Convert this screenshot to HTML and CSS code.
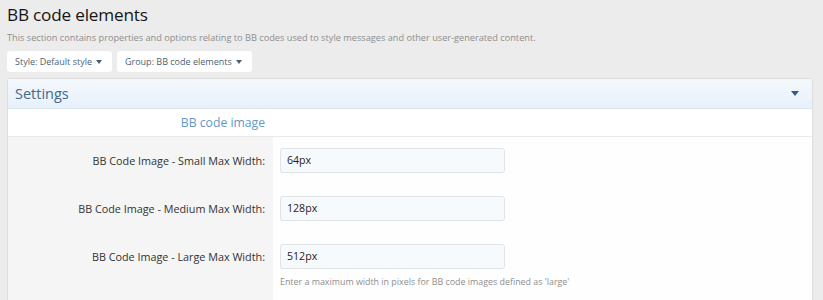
FILE: index.html
```html
<!DOCTYPE html>
<html>
<head>
<meta charset="utf-8">
<link rel="stylesheet" href="styles.css">
</head>
<body>
<div class="page">
  <h1 class="title">BB code elements</h1>
  <p class="desc">This section contains properties and options relating to BB codes used to style messages and other user-generated content.</p>
  <div class="buttons">
    <span class="btn">Style: Default style <span class="caret"></span></span>
    <span class="btn">Group: BB code elements <span class="caret"></span></span>
  </div>
  <div class="panel">
    <div class="panel-head">
      <span class="panel-title">Settings</span>
      <span class="head-caret"></span>
    </div>
    <div class="section-row">
      <div class="section-label">BB code image</div>
    </div>
    <div class="form">
      <div class="row">
        <div class="label">BB Code Image - Small Max Width:</div>
        <div class="field"><div class="input">64px</div></div>
      </div>
      <div class="row">
        <div class="label">BB Code Image - Medium Max Width:</div>
        <div class="field"><div class="input">128px</div></div>
      </div>
      <div class="row">
        <div class="label">BB Code Image - Large Max Width:</div>
        <div class="field">
          <div class="input">512px</div>
          <div class="hint">Enter a maximum width in pixels for BB code images defined as 'large'</div>
        </div>
      </div>
    </div>
  </div>
</div>
</body>
</html>
```

FILE: styles.css
```css
html, body {
  margin: 0;
  padding: 0;
  background: #ececec;
  font-family: "Open Sans", "Noto Sans", "Liberation Sans", sans-serif;
}
.page {
  padding: 3px 10px 0 7px;
}
.title {
  margin: 0;
  font-size: 17.2px;
  font-weight: 400;
  line-height: 24px;
  color: #151515;
  letter-spacing: -0.2px;
}
.desc {
  margin: 4px 0 0;
  font-size: 9.2px;
  line-height: 14px;
  color: #8e8e8e;
}
.buttons {
  display: flex;
  gap: 5px;
  margin-top: 6px;
}
.btn {
  display: flex;
  align-items: center;
  height: 21px;
  padding: 0 10px 0 8px;
  background: #fff;
  border-radius: 3px;
  font-size: 9px;
  color: #4b5f72;
}
.caret {
  display: inline-block;
  margin-left: 4px;
  border-left: 3px solid transparent;
  border-right: 3px solid transparent;
  border-top: 4px solid #4b5f72;
}
.panel {
  margin-top: 6px;
  border: 1px solid #dcdcdc;
  border-radius: 3px 3px 0 0;
  background: #fff;
}
.panel-head {
  display: flex;
  align-items: center;
  justify-content: space-between;
  height: 29px;
  padding: 0 13px 0 7px;
  background: linear-gradient(#f4f8fc, #e7f1fb);
  border-bottom: 1px solid #dde6ee;
}
.panel-title {
  font-size: 14.5px;
  color: #45698a;
}
.head-caret {
  border-left: 4px solid transparent;
  border-right: 4px solid transparent;
  border-top: 5px solid #2f5f88;
}
.section-row {
  display: grid;
  grid-template-columns: 265px 1fr;
  height: 27px;
  align-items: center;
  border-bottom: 1px solid #e9e9e9;
}
.section-label {
  text-align: right;
  padding-right: 8px;
  font-size: 12.2px;
  color: #6399c6;
}
.form {
  display: grid;
  grid-template-columns: 265px 1fr;
  align-content: start;
  min-height: 200px;
  background: linear-gradient(to right, #f5f5f5 265px, #fefefe 265px);
}
.row {
  display: contents;
}
.label {
  padding: 11px 8px 12px 0;
  line-height: 25px;
  text-align: right;
  font-size: 10.8px;
  color: #333;
}
.field {
  padding: 11px 0 12px 7px;
}
.input {
  box-sizing: border-box;
  width: 225px;
  height: 25px;
  line-height: 23px;
  padding: 0 6px;
  background: #f7fafc;
  border: 1px solid #dfe4e8;
  border-radius: 3px;
  font-size: 10.6px;
  color: #222;
}
.hint {
  margin-top: 7px;
  font-size: 8.9px;
  line-height: 12px;
  color: #8e8e8e;
}
```
